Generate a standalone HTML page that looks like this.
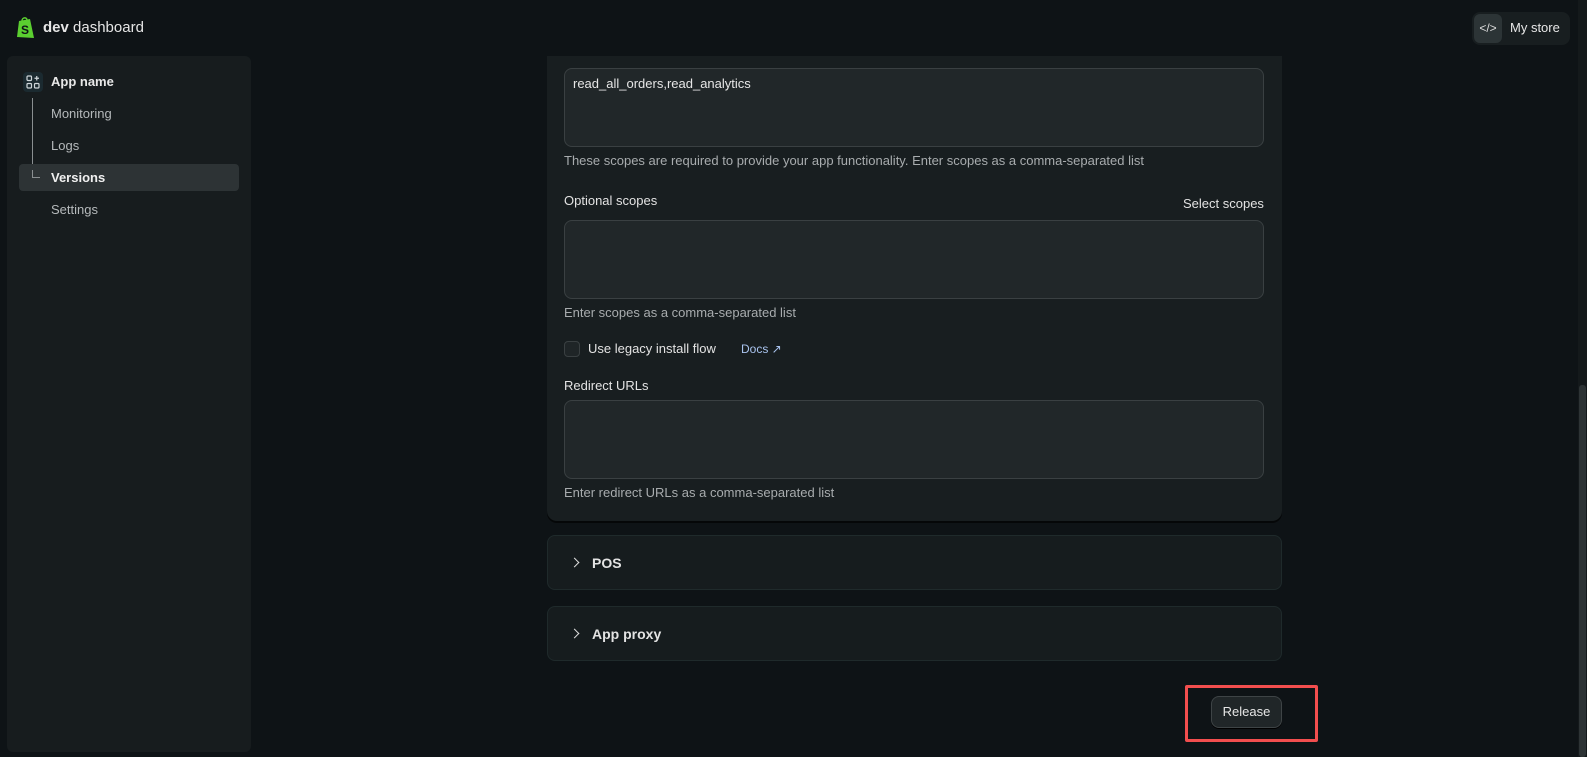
<!DOCTYPE html>
<html><head><style>
*{box-sizing:border-box;margin:0;padding:0}
body{width:1587px;height:757px;background:#0e1316;font-family:"Liberation Sans",sans-serif;color:#e3e3e3;position:relative;overflow:hidden;font-size:13px}
.abs{position:absolute}
.nav{position:absolute;left:51px;font-size:13px;color:#b5b9bb;line-height:16px}
.ta{position:absolute;left:564px;width:700px;height:79px;background:#212729;border:1px solid #3a4042;border-radius:8px}
.t{position:absolute;font-size:13px;line-height:16px}
.help{color:#a8acae;left:564px}
.lab{color:#e3e3e3;left:564px}
.acc{left:547px;width:735px;height:55px;background:#161c1e;border:1px solid #1f2a2b;border-radius:8px}
.acc span{position:absolute;left:44px;top:19px;font-weight:bold;font-size:14px;color:#e3e3e3;line-height:16px}
.acc i{position:absolute;left:23px;top:23px;width:7px;height:7px;border-right:1.6px solid #ddd;border-top:1.6px solid #ddd;transform:rotate(45deg)}
</style></head><body>
<svg class="abs" style="left:15px;top:16px" width="22" height="24" viewBox="0 0 22 24"><path d="M4 5 L15 3 L19 22 L2 21 Z" fill="#5bcf30"/><path d="M7 5 C7 1 12 1 12 4" stroke="#5bcf30" stroke-width="1.5" fill="none"/><text x="6" y="18" font-size="12" font-weight="bold" fill="#0e1316" font-family="Liberation Sans">S</text></svg>
<div class="abs" style="left:43px;top:19px;font-size:15px;color:#e6e6e6"><b>dev</b> dashboard</div>
<div class="abs" style="left:1472px;top:12px;width:98px;height:33px;background:#181e20;border-radius:8px"></div>
<div class="abs" style="left:1474px;top:14px;width:28px;height:29px;background:#2c3436;border-radius:6px;font-size:12px;color:#ddd;text-align:center;line-height:29px">&lt;/&gt;</div>
<div class="abs" style="left:1510px;top:20px;font-size:13px;color:#e6e6e6;line-height:16px">My store</div>
<div class="abs" style="left:1578px;top:0;width:9px;height:757px;background:#14191b"></div>
<div class="abs" style="left:1579px;top:385px;width:7px;height:372px;background:#2d3335;border-radius:3px"></div>

<div class="abs" style="left:7px;top:56px;width:244px;height:696px;background:#171c1e;border-radius:6px"></div>
<div class="abs" style="left:23px;top:72px;width:20px;height:20px;background:#1b2a30;border-radius:4px"></div>
<svg class="abs" style="left:26px;top:75px" width="14" height="14" viewBox="0 0 14 14" fill="none" stroke="#cfd6da" stroke-width="1.2"><rect x="1" y="1" width="4.5" height="4.5" rx="1"/><rect x="1" y="8.5" width="4.5" height="4.5" rx="1"/><rect x="8.5" y="8.5" width="4.5" height="4.5" rx="1"/><path d="M10.75 1v4.5M8.5 3.25h4.5"/></svg>
<div class="nav" style="top:74px;color:#e8e8e8;font-weight:bold">App name</div>
<div class="abs" style="left:32px;top:98px;width:1px;height:80px;background:#8a8f91"></div>
<div class="nav" style="top:106px">Monitoring</div>
<div class="nav" style="top:138px">Logs</div>
<div class="abs" style="left:19px;top:164px;width:220px;height:27px;background:#2d3335;border-radius:4px"></div>
<div class="abs" style="left:32px;top:170px;width:8px;height:8px;border-left:1px solid #8a8f91;border-bottom:1px solid #8a8f91"></div>
<div class="nav" style="top:170px;color:#f0f0f0;font-weight:bold">Versions</div>
<div class="nav" style="top:202px">Settings</div>

<div class="abs" style="left:547px;top:56px;width:735px;height:465px;background:#181e20;border-radius:0 0 10px 10px;box-shadow:0 2px 0 #050708"></div>
<div class="ta" style="top:68px"><div class="t" style="left:8px;top:7px;color:#e6e6e6">read_all_orders,read_analytics</div></div>
<div class="t help" style="top:153px">These scopes are required to provide your app functionality. Enter scopes as a comma-separated list</div>
<div class="t lab" style="top:193px">Optional scopes</div>
<div class="t" style="left:1183px;top:196px;color:#e3e3e3">Select scopes</div>
<div class="ta" style="top:220px"></div>
<div class="t help" style="top:305px">Enter scopes as a comma-separated list</div>
<div class="abs" style="left:564px;top:341px;width:16px;height:16px;border:1px solid #3a4042;background:#1f2527;border-radius:4px"></div>
<div class="t" style="left:588px;top:341px;color:#e3e3e3">Use legacy install flow</div>
<div class="t" style="left:741px;top:341px;font-size:12px;color:#a9c3ee">Docs &#8599;</div>
<div class="t lab" style="top:378px">Redirect URLs</div>
<div class="ta" style="top:400px"></div>
<div class="t help" style="top:485px">Enter redirect URLs as a comma-separated list</div>

<div class="abs acc" style="top:535px"><i></i><span>POS</span></div>
<div class="abs acc" style="top:606px"><i></i><span>App proxy</span></div>

<div class="abs" style="left:1185px;top:685px;width:133px;height:57px;border:3px solid #f24e4e;border-radius:2px"></div>
<div class="abs" style="left:1211px;top:696px;width:71px;height:32px;background:#202628;border:1px solid #3e4446;border-radius:8px;box-shadow:0 1px 0 #000;font-size:13px;color:#e6e6e6;text-align:center;line-height:30px">Release</div>
</body></html>
